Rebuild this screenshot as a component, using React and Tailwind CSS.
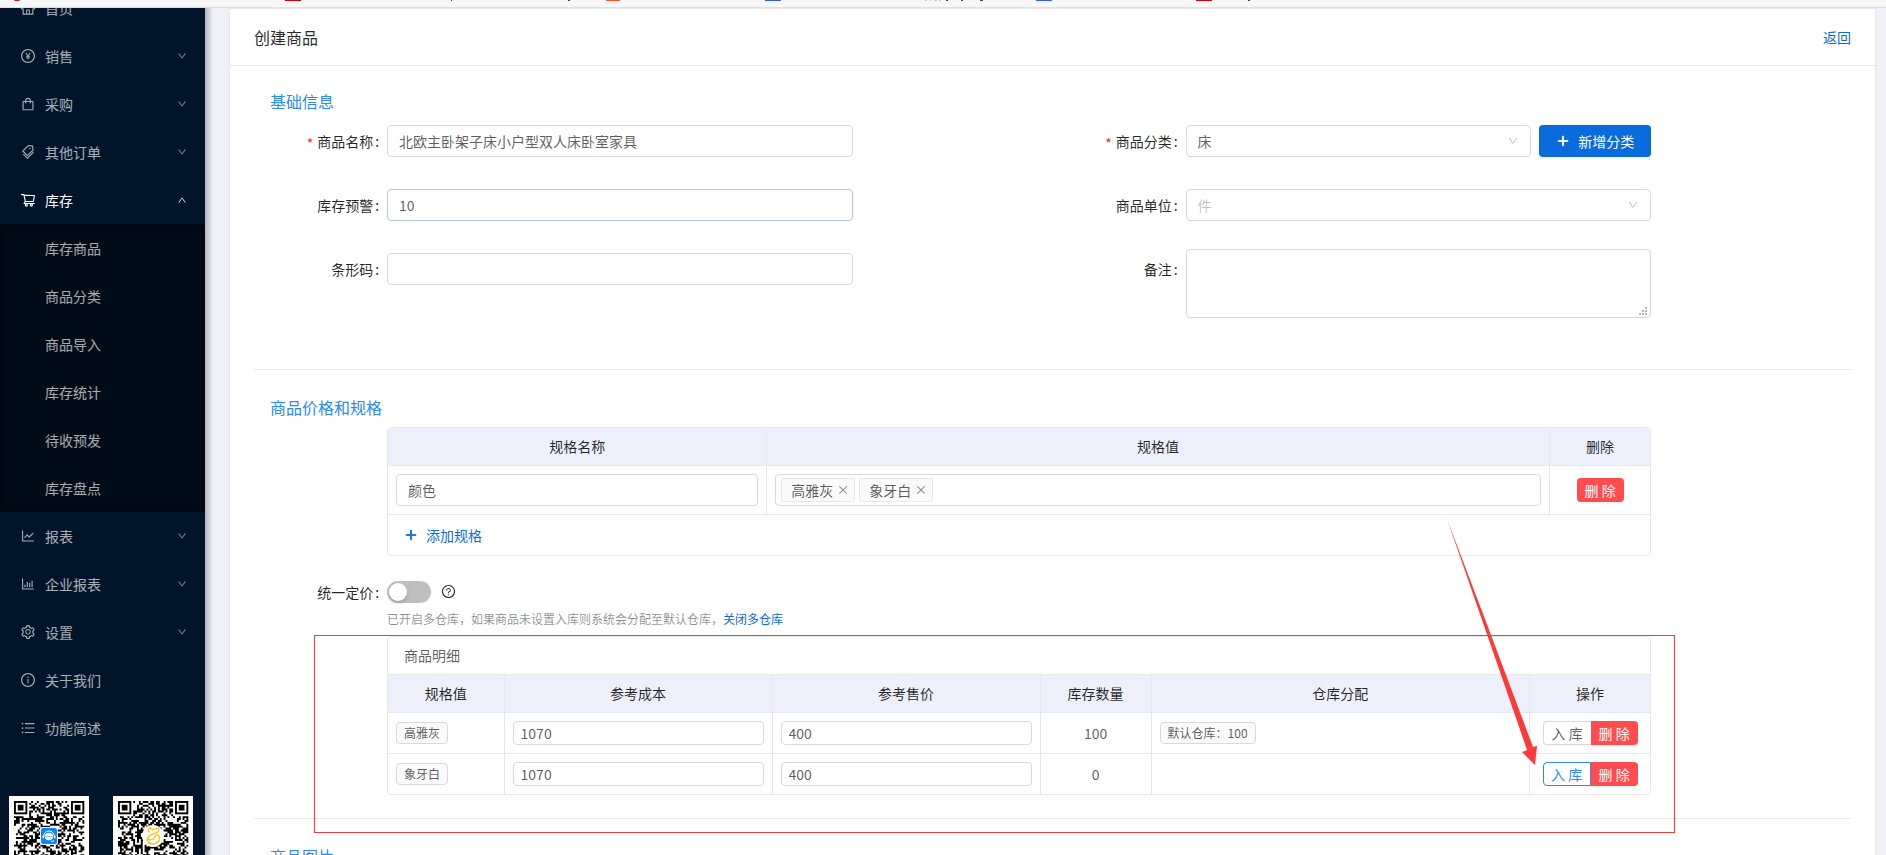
import {
  AiOutlineHome,
  AiOutlinePayCircle,
  AiOutlineShopping,
  AiOutlineTags,
  AiOutlineShoppingCart,
  AiOutlineLineChart,
  AiOutlineBarChart,
  AiOutlineSetting,
  AiOutlineInfoCircle,
  AiOutlineUnorderedList,
  AiOutlineQuestionCircle,
  AiOutlinePlus,
  AiOutlineClose,
  AiOutlineDown,
  AiOutlineUp,
} from 'react-icons/ai'

const menu = [
  { label: '首页', icon: AiOutlineHome },
  { label: '销售', icon: AiOutlinePayCircle, arrow: true },
  { label: '采购', icon: AiOutlineShopping, arrow: true },
  { label: '其他订单', icon: AiOutlineTags, arrow: true },
  {
    label: '库存',
    icon: AiOutlineShoppingCart,
    arrow: true,
    children: ['库存商品', '商品分类', '商品导入', '库存统计', '待收预发', '库存盘点'],
  },
  { label: '报表', icon: AiOutlineLineChart, arrow: true },
  { label: '企业报表', icon: AiOutlineBarChart, arrow: true },
  { label: '设置', icon: AiOutlineSetting, arrow: true },
  { label: '关于我们', icon: AiOutlineInfoCircle },
  { label: '功能简述', icon: AiOutlineUnorderedList },
]

const details = [
  { spec: '高雅灰', cost: '1070', price: '400', stock: '100', warehouse: '默认仓库：100' },
  { spec: '象牙白', cost: '1070', price: '400', stock: '0', active: true },
]

const inputClass =
  'block w-full h-8 rounded border border-[#d9d9d9] bg-white px-[11px] text-sm outline-none'
const smallInputClass =
  'block w-full h-6 rounded border border-[#d9d9d9] bg-white px-[7px] text-sm outline-none'
const thClass = 'border-[#e8e8e8] bg-[#edf0fa] text-center font-normal text-black/85'

function MenuItem({ item }) {
  const Icon = item.icon
  const Arrow = item.children ? AiOutlineUp : AiOutlineDown
  return (
    <li>
      <a
        href="#"
        className={`flex h-12 items-center pl-5 pr-[18px] text-sm ${item.children ? 'text-white' : 'text-white/65'}`}
      >
        <Icon className="size-4" />
        <span className="ml-[9px] flex-1">{item.label}</span>
        {item.arrow && <Arrow className="size-[10px]" />}
      </a>
      {item.children && (
        <ul className="bg-[#000c17] shadow-[inset_0_2px_8px_rgba(0,0,0,0.45)]">
          {item.children.map((child) => (
            <li key={child}>
              <a href="#" className="flex h-12 items-center pl-[45px] text-sm text-white/65">
                {child}
              </a>
            </li>
          ))}
        </ul>
      )}
    </li>
  )
}

const QR_SIZE = 37

// dark modules of a code, with the three finder squares left out
function qrPath(seed) {
  let state = seed
  let d = ''
  for (let y = 0; y < QR_SIZE; y++) {
    for (let x = 0; x < QR_SIZE; x++) {
      state = (state * 1103515245 + 12345) % 2147483648
      const finder = (x < 8 && y < 8) || (x > 28 && y < 8) || (x < 8 && y > 28)
      if (!finder && state / 2147483648 > 0.48) d += `M${x} ${y}h1v1h-1z`
    }
  }
  return d
}

function QrCode({ seed, label, children }) {
  return (
    <svg viewBox="0 0 80 80" className="size-20 shrink-0 bg-white" role="img" aria-label={label}>
      <g transform="translate(5 5) scale(1.9)">
        <path d={qrPath(seed)} />
        {[[0, 0], [30, 0], [0, 30]].map(([x, y]) => (
          <g key={`${x}-${y}`}>
            <rect x={x + 0.5} y={y + 0.5} width="6" height="6" fill="none" stroke="#000" />
            <rect x={x + 2} y={y + 2} width="3" height="3" />
          </g>
        ))}
      </g>
      {children}
    </svg>
  )
}

function Sidebar() {
  return (
    <aside className="relative z-10 w-[205px] shrink-0 overflow-hidden bg-[#001529]">
      <nav className="-mt-6">
        <ul>
          {menu.map((item) => (
            <MenuItem key={item.label} item={item} />
          ))}
        </ul>
      </nav>
      <div className="mt-11 flex gap-6 pl-[9px]">
        <QrCode seed={7} label="客服">
          <rect x="31" y="31" width="18" height="18" rx="2" fill="#fff" />
          <rect x="32" y="32" width="16" height="16" rx="2" fill="#0a84ff" />
          <path d="M34.500 40.500a5.500 5.500 0 0 1 11 0" fill="none" stroke="#fff" strokeWidth="1" />
          <ellipse cx="40" cy="40.500" rx="4.200" ry="3.700" fill="#fff" />
          <rect x="33.500" y="39.500" width="1.500" height="3" rx=".7" fill="#fff" />
          <rect x="45" y="39.500" width="1.500" height="3" rx=".7" fill="#fff" />
          <path d="M37.500 40.500h5" stroke="#0a84ff" strokeWidth="1" strokeDasharray="1 1" />
          <path d="M42 45.500l3-.5" stroke="#fff" strokeWidth="1" />
        </QrCode>
        <QrCode seed={91} label="公众号">
          <circle cx="40" cy="40" r="11" fill="#fff" />
          <path
            d="M36 36c-2-3 .5-5 2.500-3.200 1.500 1.200 3 .7 4.500-.3 2.500-1.300 4 1.300 2 3.200-2.500 2.300-5.500 1.800-8.300 4-4.200 3.300-2.200 8.300 3 8.300s8.300-4 6.300-7.800c-1.300-2-4-1-4.300 1-.5 2-3.200 3-6 2.300"
            fill="none"
            stroke="#f8c81c"
            strokeWidth="1.500"
            strokeLinecap="round"
          />
        </QrCode>
      </div>
    </aside>
  )
}

// lower edge of the browser's bookmark bar
function BookmarkBar() {
  return (
    <div className="relative z-20 h-2 shrink-0 border-b border-[#e0e0e0] bg-[#f8f8f8]">
      <svg className="block h-[7px] w-full" aria-hidden="true">
        <path d="M14 0h6l-1 1h-4z" fill="#e60012" />
        <path d="M285 0h16v1h-16zM1196 0h16v1h-16z" fill="#c7000b" />
        <path d="M606 0h14v1h-14z" fill="#ff5030" />
        <path d="M765 0h16v1h-16zM1036 0h16v1h-16z" fill="#2f5bff" />
        <path d="M451 0h1v1h-1zM568 0h2v1h-2zM946 0h2v1h-2zM961 0h2v1h-2zM980 0h3v1h-3zM1248 0h2v1h-2z" fill="#444" />
        <path d="M925 0h2v1h-2zM930 0h1v1h-1zM934 0h3v1h-3zM939 0h2v1h-2z" fill="#ccc" />
      </svg>
    </div>
  )
}

function Field({ label, id, required, top, children }) {
  return (
    <div className="flex w-1/2">
      <label htmlFor={id} className="flex h-8 w-1/6 shrink-0 items-center justify-end pr-2 text-black/85">
        {required && <span className="mr-1 mt-1 text-[#f5222d]">*</span>}
        {label}
        <span className="ml-0.5">:</span>
      </label>
      <div className={`w-7/12 ${top ? '-mt-1' : ''}`}>{children}</div>
    </div>
  )
}

function Select({ id, options, muted }) {
  return (
    <div className={`relative flex-1 ${muted ? 'text-black/25' : ''}`}>
      <select id={id} className={`${inputClass} appearance-none`}>
        {options.map((o) => (
          <option key={o}>{o}</option>
        ))}
      </select>
      <AiOutlineDown className="pointer-events-none absolute right-3 top-[10px] size-3 text-black/25" />
    </div>
  )
}

function BasicInfo() {
  return (
    <section className="border-b border-[#e8e8e8] pb-[51px] pt-[23px]">
      <h2 className="mb-3 pl-4 text-base leading-6 text-[#2b8cec]">基础信息</h2>
      <div className="space-y-8">
        <div className="flex">
          <Field label="商品名称" id="name" required>
            <input id="name" className={inputClass} defaultValue="北欧主卧架子床小户型双人床卧室家具" />
          </Field>
          <Field label="商品分类" id="category" required>
            <div className="flex gap-2">
              <Select id="category" options={['床']} />
              <button className="flex h-8 items-center gap-2 rounded bg-[#0a6cdc] px-[17px] text-white shadow-[0_2px_0_rgba(0,0,0,0.04)]">
                <AiOutlinePlus className="size-3.5" strokeWidth={60} />
                新增分类
              </button>
            </div>
          </Field>
        </div>
        <div className="flex">
          <Field label="库存预警" id="warn">
            <input
              id="warn"
              className="block h-8 w-full rounded border border-[#b5c9dd] bg-white px-[11px] text-sm outline-none"
              defaultValue="10"
            />
          </Field>
          <Field label="商品单位" id="unit">
            <Select id="unit" options={['件']} muted />
          </Field>
        </div>
        <div className="flex">
          <Field label="条形码" id="barcode">
            <input id="barcode" className={inputClass} />
          </Field>
          <Field label="备注" id="remark" top>
            <div className="relative">
              <textarea
                id="remark"
                className="block h-[69px] w-full resize-none rounded border border-[#d9d9d9] bg-white px-[11px] py-1 outline-none"
              />
              <svg className="absolute bottom-[3px] right-[4px] size-2" fill="#b5b5b5" aria-hidden="true">
                <path d="M6 0h2v2H6zM3 3h2v2H3zM6 3h2v2H6zM0 6h2v2H0zM3 6h2v2H3zM6 6h2v2H6z" />
              </svg>
            </div>
          </Field>
        </div>
      </div>
    </section>
  )
}

function SpecTable() {
  return (
    <div className="overflow-hidden rounded border border-[#e8e8e8]">
      <table className="w-full table-fixed">
        <colgroup>
          <col className="w-[30%]" />
          <col />
          <col className="w-[101px]" />
        </colgroup>
        <thead>
          <tr className="h-[37px]">
            <th className={`${thClass} border-b border-r`}>规格名称</th>
            <th className={`${thClass} border-b border-r`}>规格值</th>
            <th className={`${thClass} border-b`}>删除</th>
          </tr>
        </thead>
        <tbody>
          <tr className="h-[49px]">
            <td className="border-b border-r border-[#e8e8e8] px-2">
              <input className={inputClass} defaultValue="颜色" aria-label="规格名称" />
            </td>
            <td className="border-b border-r border-[#e8e8e8] px-2">
              <div className="flex h-8 items-center gap-1 rounded border border-[#d9d9d9] px-[5px]">
                {['高雅灰', '象牙白'].map((v) => (
                  <span
                    key={v}
                    className="flex h-6 items-center gap-1 rounded-xs border border-[#e8e8e8] bg-[#fafafa] pl-[9px] pr-[5px]"
                  >
                    {v}
                    <button aria-label={`移除${v}`} className="text-black/45">
                      <AiOutlineClose className="size-3" />
                    </button>
                  </span>
                ))}
                <input className="min-w-0 flex-1 outline-none" aria-label="规格值" />
              </div>
            </td>
            <td className="border-b border-[#e8e8e8] text-center">
              <button className="h-6 rounded bg-[#ff4d4f] px-2 text-white shadow-[0_2px_0_rgba(0,0,0,0.04)]">
                删 除
              </button>
            </td>
          </tr>
        </tbody>
      </table>
      <button className="flex h-10 items-center gap-2 px-4 text-[#0a6cdc]">
        <AiOutlinePlus className="size-3.5" strokeWidth={60} />
        添加规格
      </button>
    </div>
  )
}

function DetailTable() {
  return (
    <div className="overflow-hidden rounded border border-[#e8e8e8]">
      <div className="flex h-[37px] items-center px-4">商品明细</div>
      <table className="w-full table-fixed">
        <colgroup>
          <col className="w-[116px]" />
          <col className="w-[268px]" />
          <col className="w-[268px]" />
          <col className="w-[111px]" />
          <col />
          <col className="w-[121px]" />
        </colgroup>
        <thead>
          <tr className="h-[38px]">
            {['规格值', '参考成本', '参考售价', '库存数量', '仓库分配', '操作'].map((h) => (
              <th key={h} className={`${thClass} border-y border-r last:border-r-0`}>
                {h}
              </th>
            ))}
          </tr>
        </thead>
        <tbody>
          {details.map((row) => (
            <tr key={row.spec} className="h-[41px] border-b border-[#e8e8e8] last:border-b-0">
              <td className="border-r border-[#e8e8e8] px-2">
                <span className="flex h-[22px] w-fit items-center rounded border border-[#d9d9d9] bg-[#fafafa] px-[7px] text-xs">
                  {row.spec}
                </span>
              </td>
              <td className="border-r border-[#e8e8e8] px-2">
                <input className={smallInputClass} defaultValue={row.cost} aria-label={`${row.spec}参考成本`} />
              </td>
              <td className="border-r border-[#e8e8e8] px-2">
                <input className={smallInputClass} defaultValue={row.price} aria-label={`${row.spec}参考售价`} />
              </td>
              <td className="border-r border-[#e8e8e8] text-center">{row.stock}</td>
              <td className="border-r border-[#e8e8e8] px-2">
                {row.warehouse && (
                  <span className="flex h-[22px] w-fit items-center rounded border border-[#d9d9d9] bg-[#fafafa] px-[7px] text-xs">
                    {row.warehouse}
                  </span>
                )}
              </td>
              <td>
                <div className="flex justify-center">
                  <button
                    className={`h-6 w-12 rounded-l border bg-white ${row.active ? 'border-[#2b8cec] text-[#2b8cec]' : 'border-[#d9d9d9] border-r-0 shadow-[0_2px_0_rgba(0,0,0,0.02)]'}`}
                  >
                    入 库
                  </button>
                  <button className="h-6 w-[47px] rounded-r bg-[#ff4d4f] text-white shadow-[0_2px_0_rgba(0,0,0,0.04)]">
                    删 除
                  </button>
                </div>
              </td>
            </tr>
          ))}
        </tbody>
      </table>
    </div>
  )
}

function PriceSpec() {
  return (
    <section className="border-b border-[#e8e8e8] pb-[23px] pt-[25px]">
      <h2 className="mb-2 pl-4 text-base leading-6 text-[#2b8cec]">商品价格和规格</h2>
      <div className="ml-[8.333%] w-19/24">
        <SpecTable />
      </div>
      <div className="mt-5 flex">
        <label htmlFor="uniform" className="flex h-8 w-1/12 shrink-0 items-center justify-end pr-2 text-black/85">
          统一定价
          <span className="ml-0.5">:</span>
        </label>
        <div className="w-19/24">
          <div className="flex h-8 items-center gap-[10px]">
            <input
              id="uniform"
              type="checkbox"
              role="switch"
              className="h-[22px] w-11 appearance-none rounded-full bg-black/25 p-0.5 before:block before:size-[18px] before:rounded-full before:bg-white before:shadow-[0_2px_4px_rgba(0,35,11,0.2)] checked:bg-[#0a6cdc] checked:before:ml-[22px]"
            />
            <AiOutlineQuestionCircle className="size-[15px] text-black/85" />
          </div>
          <p className="mb-[7px] text-xs leading-[21px] text-black/45">
            已开启多仓库，如果商品未设置入库则系统会分配至默认仓库，
            <a href="#" className="text-[#0a6cdc]">
              关闭多仓库
            </a>
          </p>
          <div className="relative">
            <DetailTable />
            <div className="pointer-events-none absolute -bottom-[38px] -left-[73px] -right-6 -top-px border border-[#fc3a3a]" />
            <svg
              viewBox="0 0 92 246"
              className="pointer-events-none absolute -top-[117px] right-[113px] h-[246px] w-[92px]"
              fill="#fc3a3a"
              aria-hidden="true"
            >
              <path d="M1 0L39 100L87 228L91 227L89 246L76 233L81 231L36 101Z" />
            </svg>
          </div>
        </div>
      </div>
    </section>
  )
}

export default function App() {
  return (
    <div className="flex h-screen flex-col overflow-hidden bg-[#eff1f6] font-['Noto_Sans_CJK_SC',sans-serif] text-sm text-black/65">
      <BookmarkBar />
      <div className="flex min-h-0 flex-1">
        <Sidebar />
        <div className="w-2 shrink-0 bg-linear-to-r from-black/25 to-transparent" />
        <main className="ml-4 mr-[10px] min-w-0 flex-1 border-x border-t border-[#e8e8e8] bg-white">
          <header className="flex h-[57px] items-center justify-between border-b border-[#e8e8e8] px-6">
            <h1 className="text-base text-black/85">创建商品</h1>
            <a href="#" className="text-[#0a6cdc]">
              返回
            </a>
          </header>
          <div className="px-6">
            <BasicInfo />
            <PriceSpec />
            <section className="pt-[25px]">
              <h2 className="pl-4 text-base leading-6 text-[#2b8cec]">商品图片</h2>
            </section>
          </div>
        </main>
      </div>
    </div>
  )
}
